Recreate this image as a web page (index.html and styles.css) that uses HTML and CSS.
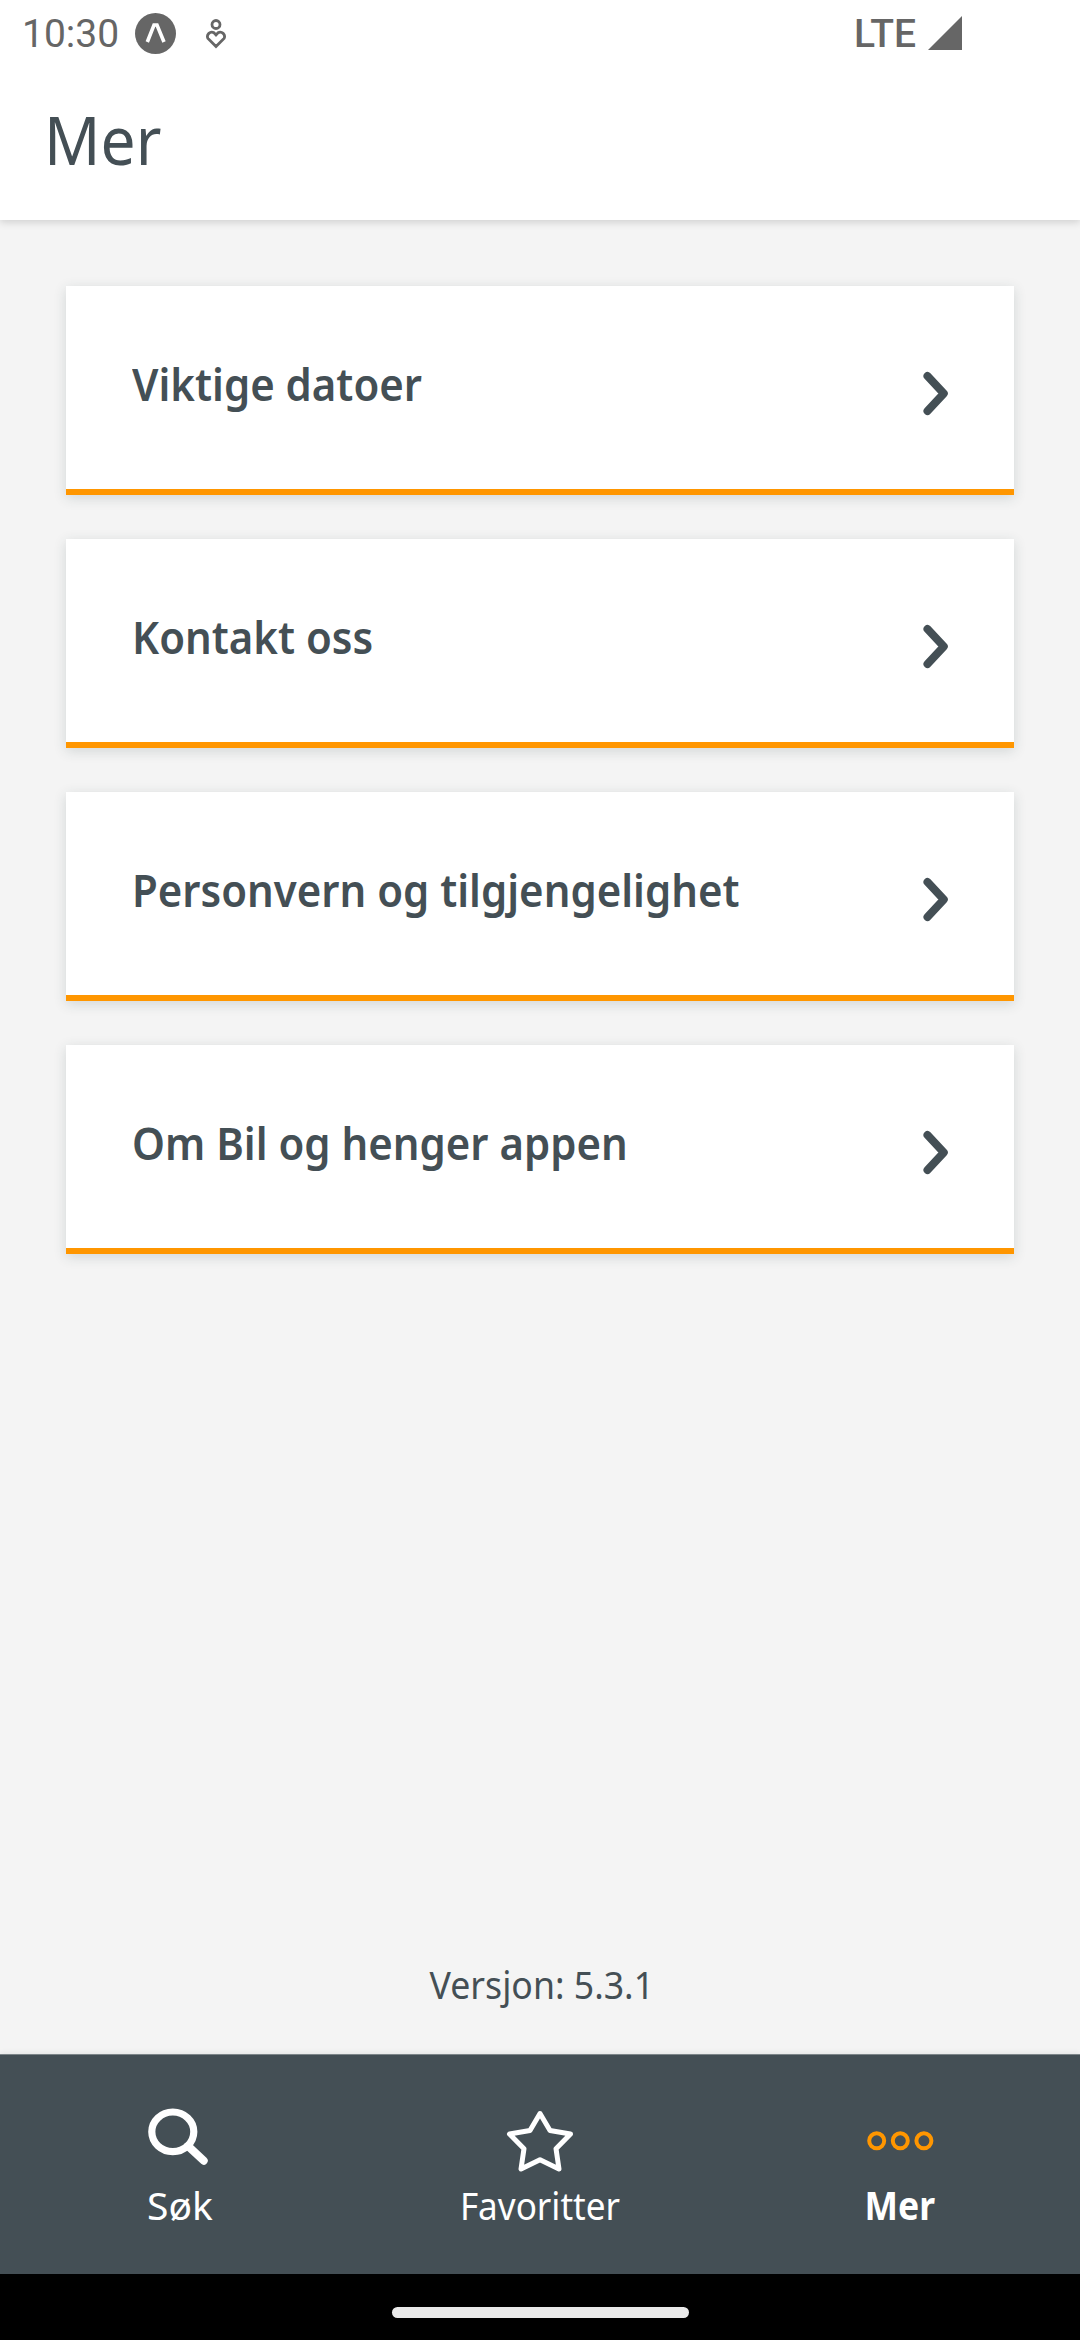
FILE: index.html
```html
<!DOCTYPE html>
<html lang="nb">
<head>
<meta charset="utf-8">
<title>Mer</title>
<link rel="stylesheet" href="styles.css">
</head>
<body>
<div class="app">
  <div class="status">
    <span class="clock">10:30</span>
    <svg class="badge" viewBox="0 0 41 41"><circle cx="20.5" cy="20.5" r="20.5" fill="#666"/><path d="M12.300 29 19 12h3l7 17" fill="none" stroke="#fff" stroke-width="3.600"/></svg>
    <svg class="heart" viewBox="0 0 22 30" fill="none" stroke="#666" stroke-width="2.8"><circle cx="11" cy="5.5" r="4"/><path d="M11 27.5 3 19.500A4.300 4.300 0 0 1 9 13.800L11 16l2-2.200A4.300 4.300 0 0 1 19 19.500Z"/></svg>
    <span class="network">LTE</span>
    <svg class="signal" viewBox="0 0 34 34"><path d="M34 0v34H0Z" fill="#666"/></svg>
  </div>
  <header class="header"><h1 class="title">Mer</h1></header>
  <main class="content">
    <a class="card"><span class="label">Viktige datoer</span><svg class="chevron" viewBox="0 0 26 45"><path d="M4.500 5 20.800 22.500 4.500 40"/></svg></a>
    <a class="card"><span class="label">Kontakt oss</span><svg class="chevron" viewBox="0 0 26 45"><path d="M4.500 5 20.800 22.500 4.500 40"/></svg></a>
    <a class="card"><span class="label">Personvern og tilgjengelighet</span><svg class="chevron" viewBox="0 0 26 45"><path d="M4.500 5 20.800 22.500 4.500 40"/></svg></a>
    <a class="card"><span class="label">Om Bil og henger appen</span><svg class="chevron" viewBox="0 0 26 45"><path d="M4.500 5 20.800 22.500 4.500 40"/></svg></a>
    <p class="version">Versjon: 5.3.1</p>
  </main>
  <nav class="tabs">
    <a class="tab"><svg class="icon" viewBox="0 0 70 70"><g fill="none" stroke="#fff"><ellipse cx="27.800" cy="27.800" rx="21" ry="19.800" stroke-width="7.200"/><path d="m43 42 15.700 14.700" stroke-width="8" stroke-linecap="round"/></g></svg><span class="tab-label">Søk</span></a>
    <a class="tab wide"><svg class="icon" viewBox="0 0 70 70"><path d="M35 9.500 45 26.500 65.500 30 51 44.700 54 65 35 55.700 16 65 19 44.700 4.500 30 25 26.500Z" fill="none" stroke="#fff" stroke-width="5" stroke-linejoin="round"/></svg><span class="tab-label">Favoritter</span></a>
    <a class="tab active"><svg class="icon" viewBox="0 0 70 70"><g fill="none" stroke="#ff9600" stroke-width="4"><circle cx="11.700" cy="36.800" r="7.500"/><circle cx="35.300" cy="36.800" r="7.500"/><circle cx="58.900" cy="36.800" r="7.500"/></g></svg><span class="tab-label">Mer</span></a>
  </nav>
  <div class="gesture"><div class="pill"></div></div>
</div>
</body>
</html>
```

FILE: styles.css
```css
body { margin: 0; font-family: "Noto Sans", sans-serif; font-stretch: 87.5%; color: #444f55; }
.app { width: 1080px; height: 2340px; display: flex; flex-direction: column; background: #f4f4f4; }
.status { position: relative; z-index: 1; height: 67px; box-sizing: border-box; display: flex; align-items: center; padding: 0 118px 0 22px; background: #fff; color: #666; font-family: Roboto, sans-serif; font-stretch: normal; font-size: 39px; }
.badge { width: 41px; height: 41px; margin-left: 15.500px; }
.heart { width: 22px; height: 30px; margin-left: 29.500px; }
.network { margin-left: auto; font-weight: 500; }
.signal { width: 34px; height: 34px; margin: 0 0 1px 12px; }
.header { height: 153px; background: #fff; box-shadow: 0 2px 8px rgba(0,0,0,.16); }
.title { margin: 0; padding: 27px 0 0 44px; font-size: 67px; line-height: 90px; font-weight: 400; transform: scaleX(.93); transform-origin: 44px 0; }
.content { flex: 1; display: flex; flex-direction: column; gap: 44px; padding: 66px 66px 0; }
.card { height: 203px; border-bottom: 6px solid #ff9600; background: #fff; box-shadow: 0 3px 12px rgba(40,60,60,.16); display: flex; align-items: center; justify-content: space-between; padding: 0 65px 0 66px; }
.label { padding-bottom: 8px; font-size: 45px; font-weight: 600; line-height: 60px; transform: scaleX(.932); transform-origin: left; }
.chevron { width: 26px; height: 45px; padding-top: 11px; fill: none; stroke: #444f55; stroke-width: 8; stroke-linecap: round; stroke-linejoin: round; }
.version { margin: auto 0 40px; padding-left: 4px; text-align: center; font-size: 39px; line-height: 60px; transform: scaleX(.914); }
.tabs { height: 220px; box-sizing: border-box; border-top: 1px solid #7d8589; box-shadow: 0 -2px 5px rgba(0,0,0,.05); display: flex; background: #444f55; color: #fff; }
.tab { flex: 1; display: flex; flex-direction: column; align-items: center; padding-top: 49px; }
.icon { width: 70px; height: 70px; }
.tab-label { margin-top: 6px; font-size: 39px; line-height: 50px; }
.wide .tab-label { transform: scaleX(.9); }
.active .tab-label { font-weight: 700; transform: scaleX(.91); }
.gesture { height: 66px; box-sizing: border-box; padding-top: 33px; background: #000; display: flex; justify-content: center; }
.pill { width: 297px; height: 11px; border-radius: 5.500px; background: #eaeaea; }
```
